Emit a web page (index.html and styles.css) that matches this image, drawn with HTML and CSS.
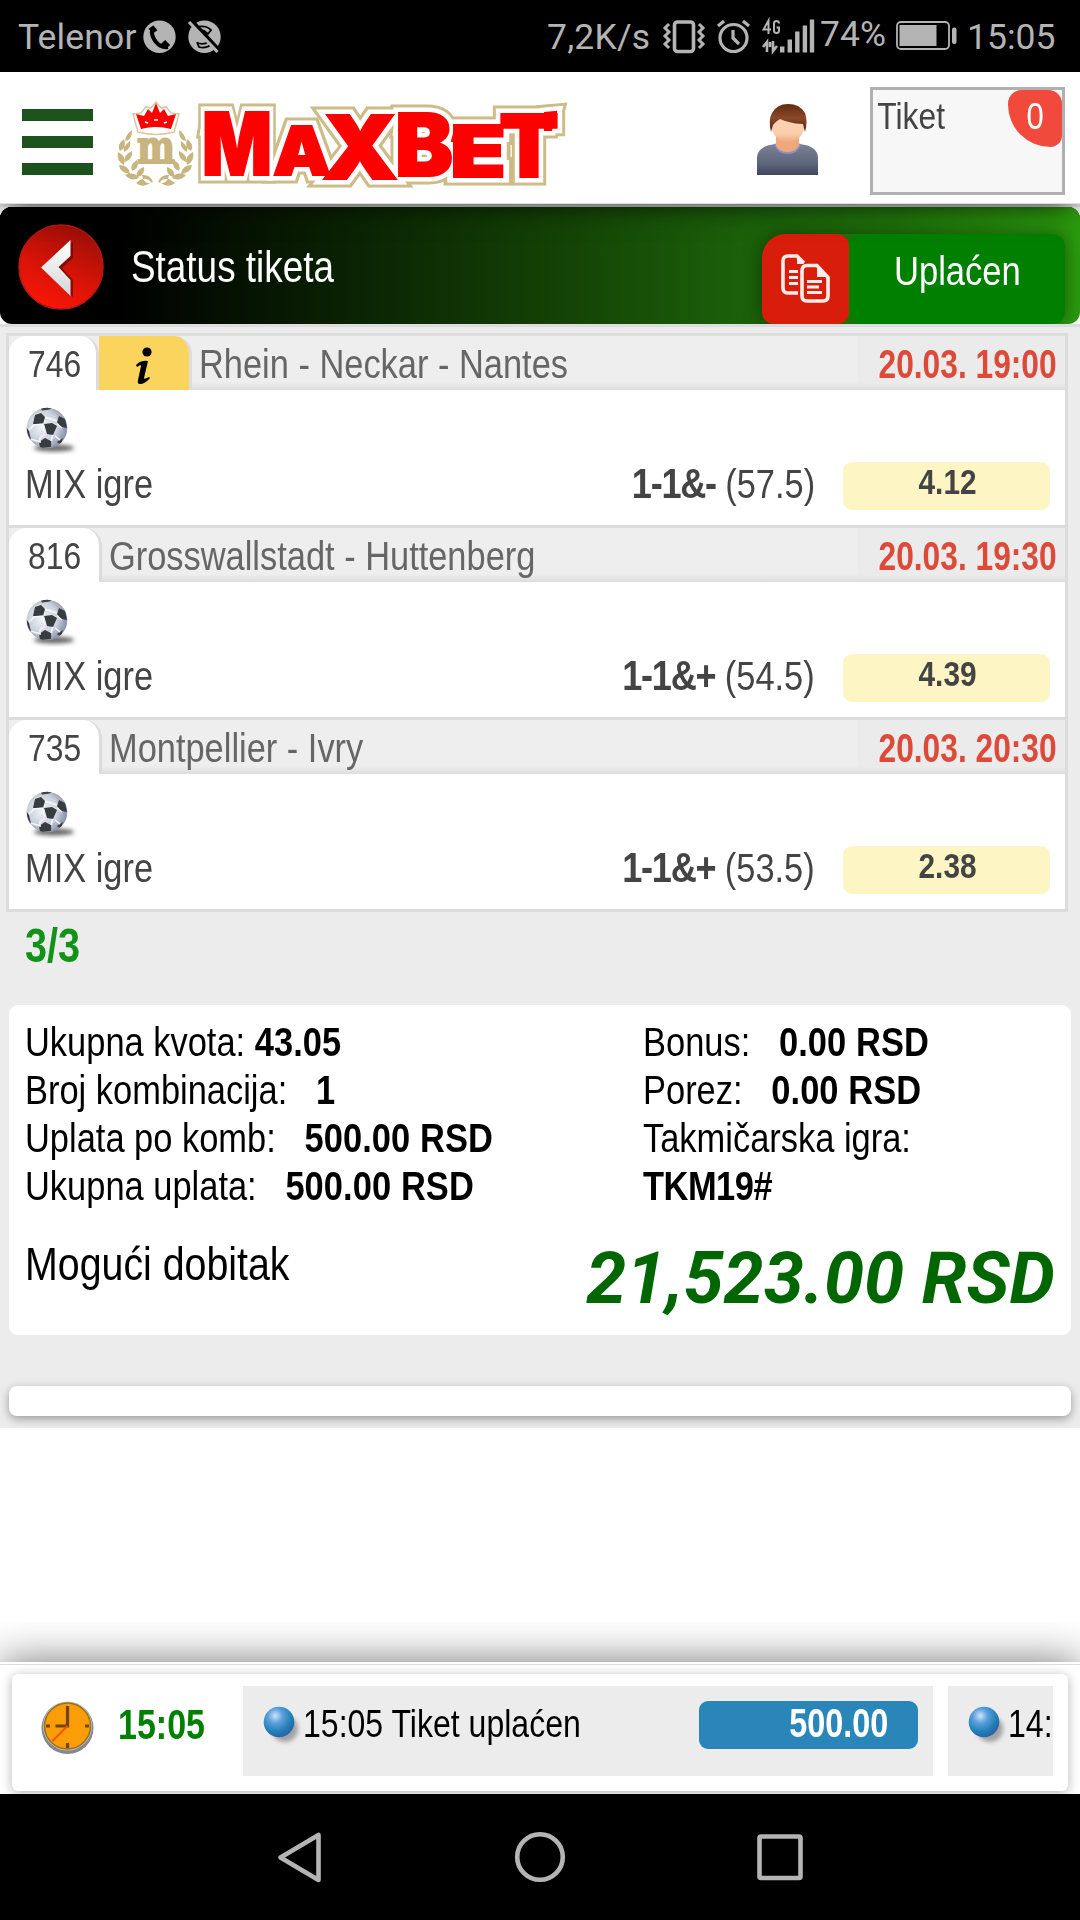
FILE: index.html
```html
<!DOCTYPE html>
<html lang="sr">
<head>
<meta charset="utf-8">
<title>MaxBet - Status tiketa</title>
<link rel="stylesheet" href="styles.css">
</head>
<body>
<svg class="defs" width="0" height="0" aria-hidden="true">
  <defs>
    <radialGradient id="ballShade" cx=".4" cy=".45" r=".65"><stop offset="0" stop-color="#f4f6f8"/><stop offset=".55" stop-color="#ccd3dd"/><stop offset="1" stop-color="#76839a"/></radialGradient>
    <radialGradient id="blueShade" cx=".38" cy=".3" r=".7"><stop offset="0" stop-color="#cfe3f8"/><stop offset=".35" stop-color="#5a9fdc"/><stop offset=".75" stop-color="#217fb4"/><stop offset="1" stop-color="#2b62ad"/></radialGradient>
    <filter id="soft" x="-50%" y="-100%" width="200%" height="300%"><feGaussianBlur stdDeviation="2"/></filter>
    <clipPath id="ballClip"><circle cx="21" cy="21" r="20.3"/></clipPath>
    <symbol id="football" viewBox="0 0 52 48">
      <ellipse cx="28" cy="41" rx="20" ry="3.6" fill="#333" opacity=".75" filter="url(#soft)"/>
      <circle cx="21" cy="21" r="20.3" fill="url(#ballShade)"/>
      <g clip-path="url(#ballClip)">
        <path d="M18 17l8-1 5 3-4 9-6-1zM9 8l6-2 4 4-2 7H7zM13 35l6-4 6 3v6l-11 1zM33 9l6 3 2 9-6-1-4-5zM14 0h14l-5 2.500-7 1zM0 20l3 4 2 9-5-3zM31 35l6-4-2 7z" fill="#383b40"/>
        <path d="M17 17l2 9M17 17l-9 1-5 5M19 27l-5 4 0 4-9-3M29 29l5 4M19 10l12 4M27 28l-2 6M31 17l5 4" fill="none" stroke="#f4f6fa" stroke-width="1.600"/>
      </g>
    </symbol>
    <symbol id="marble" viewBox="0 0 40 42">
      <circle cx="22" cy="23" r="13" fill="#666" opacity=".55" filter="url(#soft)"/>
      <circle cx="16" cy="16" r="15.300" fill="url(#blueShade)"/>
    </symbol>
  </defs>
</svg>

<div class="status">
  <span class="carrier">Telenor</span>
  <svg class="st-calls" width="84" height="40" viewBox="140 17 84 40">
    <circle cx="159.500" cy="36.700" r="16.200" fill="#b4b4b4"/>
    <path d="M152 29q-1 7 4 13t12 5" fill="none" stroke="#000" stroke-width="4"/>
    <path d="M151 27l4 5M163 42l5 5" fill="none" stroke="#000" stroke-width="6"/>
    <circle cx="204.500" cy="36.700" r="16.200" fill="#b4b4b4"/>
    <path d="M197 27q9-2 14 3l-3 4q-4-4-8-4M197 42l2 5q7 2 13-3M198 43q6 2 10-1" fill="none" stroke="#000" stroke-width="1.800"/>
    <path d="M191 20l28 30" stroke="#000" stroke-width="4"/>
    <path d="M189 22l28.500 30" stroke="#b4b4b4" stroke-width="3.200"/>
  </svg>
  <span class="speed">7,2K/s</span>
  <svg class="st-icons" width="156" height="40" viewBox="662 17 156 40" fill="none" stroke="#b4b4b4">
    <rect x="674.500" y="22" width="19" height="29.500" rx="3" stroke-width="3.600"/>
    <path d="M669 24l-4 4 4 4-4 4 4 4-4 4 4 4M699 24l4 4-4 4 4 4-4 4 4 4-4 4" stroke-width="3"/>
    <circle cx="733.500" cy="38" r="13.500" stroke-width="3.200"/>
    <path d="M718 26l6-5M749 26l-6-5M733 30v8l6 6" stroke-width="3.200"/>
    <path d="M768.500 34V20.500l-5 9h7.500M779 23.500q0-2.500-2.500-2.500t-2.500 2.500v7q0 2.500 2.500 2.500t2.500-2.500v-3h-2.500" stroke-width="2"/>
    <path d="M763 47l4-5v10M770 47v-5M773 41v10l4-5" stroke-width="2.600"/>
    <path d="M782.200 52.500v-6M789.800 52.500v-13M797.300 52.500V31.500M804.900 52.500V25.500M812 52.500V19.500" stroke-width="4.400"/>
  </svg>
  <span class="percent">74%</span>
  <svg class="st-batt" width="64" height="32" viewBox="895 20 64 32">
    <rect x="897" y="22" width="52" height="27" rx="4" fill="none" stroke="#b4b4b4" stroke-width="1.800"/>
    <rect x="899.500" y="25" width="37" height="21" fill="#b4b4b4"/>
    <rect x="952" y="27.500" width="4.500" height="16.500" rx="2" fill="#b4b4b4"/>
  </svg>
  <span class="time">15:05</span>
</div>

<header class="top">
  <svg class="menu" width="72" height="68" viewBox="0 0 72 68"><path d="M0 7h71M0 34h71M0 61h71" stroke="#1c531c" stroke-width="12"/></svg>
  <svg class="logo" width="454" height="100" viewBox="114 96 454 100">
    <g fill="#c8b47e">
      <path d="M138 132l-5-18 8-1 5-6 5 1 5-6 5 6 5-1 5 6 8 1-5 18q-18 5-36 0z" fill="#fff" stroke="#d8cba4" stroke-width="1.600"/>
      <path d="M141 129l-5-15 8 2 4-7 4 4 4-10 4 10 4-4 4 7 8-2-5 15q-15-4-30 0z" fill="#f00"/>
      <path d="M145 122l3 1M154 120h4M164 123l3-1" stroke="#fff" stroke-width="1.600"/>
      <text x="137" y="162.500" class="logo-m" textLength="38" lengthAdjust="spacingAndGlyphs">m</text>
      <g id="laurel">
        <path d="M132 130q-6 4-7 11q7 0 7-11zM124 139q-8 6-4 12q7-3 4-12zM130 141q-8 6-6 11q8-4 6-11zM118 152q-2 9 6 13q3-9-6-13zM132 151q-9 4-7 11q8-3 7-11zM119 165q1 8 11 9q-1-9-11-9zM137 160q-8 5-5 11q8-3 5-11zM125 175q6 7 14 3q-5-7-14-3zM144 167q-9 3-7 10q8-1 7-10zM136 183q7 6 15-1q-6-7-15 1zM142 175q8-1 11 7q-9 4-11-7z"/>
      </g>
      <use href="#laurel" transform="matrix(-1 0 0 1 311 0)"/>
    </g>
    <g class="wordmark-gold"><use href="#wordmark"/></g>
    <g class="wordmark-white"><use href="#wordmark"/></g>
    <g class="wordmark-red">
      <g id="wordmark">
        <text><tspan x="202" y="175" font-size="87" textLength="70" lengthAdjust="spacingAndGlyphs">M</tspan><tspan x="273" y="175" font-size="68" textLength="58" lengthAdjust="spacingAndGlyphs">A</tspan><tspan x="322" y="179" font-size="88" textLength="76" lengthAdjust="spacingAndGlyphs">X</tspan><tspan x="395" y="176" font-size="86" textLength="58" lengthAdjust="spacingAndGlyphs">B</tspan><tspan x="450" y="177" font-size="72" textLength="56" lengthAdjust="spacingAndGlyphs">E</tspan><tspan x="499" y="177" font-size="87" textLength="60" lengthAdjust="spacingAndGlyphs">T</tspan></text>
        <path d="M209 113l-3 17h4zM402 113l-3 17h4zM456 126l-4 15h5zM556 112l-5 18h-6v-17z"/>
      </g>
    </g>
  </svg>
  <svg class="user" width="61" height="71" viewBox="0 0 61 71">
    <defs>
      <linearGradient id="shirt" x1="0" y1="0" x2="0" y2="1"><stop offset="0" stop-color="#7b8296"/><stop offset=".6" stop-color="#5f677c"/><stop offset="1" stop-color="#3f475c"/></linearGradient>
      <linearGradient id="skin" x1="0" y1="0" x2="0" y2="1"><stop offset="0" stop-color="#fbd5b8"/><stop offset=".7" stop-color="#fbceac"/><stop offset="1" stop-color="#eda87c"/></linearGradient>
      <linearGradient id="hair" x1="0" y1="0" x2="0" y2="1"><stop offset="0" stop-color="#63290f"/><stop offset=".5" stop-color="#8a4a2a"/><stop offset="1" stop-color="#541c08"/></linearGradient>
    </defs>
    <path d="M0 71V53q1-11 18-13h25q17 2 18 13v18z" fill="url(#shirt)"/>
    <path d="M17 40q3 10 13.500 10T44 40l-4-1H21z" fill="#8d90c4"/>
    <path d="M19 32h23v10q-4 6-11.500 6T19 42z" fill="#eda87c"/>
    <path d="M14 17q0 12 6 17t10.500 4.500T42 34q6-5 6-17L31 8z" fill="url(#skin)"/>
    <path d="M14 28q-3-12 1-19Q20 0 31 0q12 0 17 9 3 8 0 19l-2-8q-8 0-14-2-5-1-9-3-5 3-7 6z" fill="url(#hair)"/>
  </svg>
  <div class="ticket-box"><span class="ticket-label">Tiket</span><span class="ticket-badge"><span>0</span></span></div>
</header>

<main>
  <div class="title-bar">
    <svg class="back" width="88" height="88" viewBox="17 223 88 88">
      <defs><linearGradient id="red" x1=".7" y1="0" x2=".3" y2="1"><stop offset="0" stop-color="#980f09"/><stop offset=".55" stop-color="#d81307"/><stop offset="1" stop-color="#fb1609"/></linearGradient>
      <linearGradient id="silver" x1="0" y1="0" x2="0" y2="1"><stop offset="0" stop-color="#fff"/><stop offset="1" stop-color="#d3d7d7"/></linearGradient></defs>
      <circle cx="61" cy="267" r="42" fill="url(#red)" stroke="#b51a12" stroke-width="1.500"/>
      <path d="M73 242v16l-11 10 11 12v17L43 269z" fill="#610806" opacity=".7"/>
      <path d="M70.500 240v16l-12 11 12 13v16L41 267.500z" fill="url(#silver)"/>
    </svg>
    <h1>Status tiketa</h1>
    <div class="actions">
      <div class="copy">
        <svg width="50" height="50" viewBox="0 0 50 50" fill="none" stroke="#fdecea" stroke-width="3.600">
          <path d="M17 39H7q-5 0-5-5V7q0-5 5-5h9l7 7"/><path d="M16 2v8h7z" fill="#fdecea" stroke="none"/>
          <path d="M8 17.500h9M8 23.500h9M8 29.500h9" stroke-width="3.200"/>
          <path d="M26 11.500h10l11 12V42q0 5-5 5H26q-5 0-5-5V17q0-5.500 5-5.500z"/><path d="M36 11.500V23h11z" fill="#fdecea" stroke="none"/>
          <path d="M26 27.500h15M26 33h12M26 38.500h15" stroke-width="3.200"/>
        </svg>
      </div>
      <div class="paid"><span>Uplaćen</span></div>
    </div>
  </div>

  <div class="page">
    <section class="matches">
      <article class="match">
        <div class="m-head">
          <div class="tab narrow-tab"><span>746</span></div>
          <div class="info"><svg width="18" height="38" viewBox="0 0 18 38"><circle cx="12" cy="5" r="4.600"/><path d="M1 18q5-5 12-4l-4 17q0 2 5-1l1 1q-5 6-10 6-3 0-2-4l3-14q0-2-4 1z"/></svg></div>
          <div class="teams"><span>Rhein - Neckar - Nantes</span></div>
          <div class="date"><span>20.03. 19:00</span></div>
        </div>
        <div class="m-body">
          <svg class="ball" width="52" height="48"><use href="#football"/></svg>
          <div class="m-row"><span class="game">MIX igre</span><span class="pick"><b>1-1&amp;-</b> (57.5)</span><span class="odds"><b>4.12</b></span></div>
        </div>
      </article>
      <article class="match">
        <div class="m-head">
          <div class="tab"><span>816</span></div>
          <div class="teams"><span>Grosswallstadt - Huttenberg</span></div>
          <div class="date"><span>20.03. 19:30</span></div>
        </div>
        <div class="m-body">
          <svg class="ball" width="52" height="48"><use href="#football"/></svg>
          <div class="m-row"><span class="game">MIX igre</span><span class="pick"><b>1-1&amp;+</b> (54.5)</span><span class="odds"><b>4.39</b></span></div>
        </div>
      </article>
      <article class="match">
        <div class="m-head">
          <div class="tab"><span>735</span></div>
          <div class="teams"><span>Montpellier - Ivry</span></div>
          <div class="date"><span>20.03. 20:30</span></div>
        </div>
        <div class="m-body">
          <svg class="ball" width="52" height="48"><use href="#football"/></svg>
          <div class="m-row"><span class="game">MIX igre</span><span class="pick"><b>1-1&amp;+</b> (53.5)</span><span class="odds"><b>2.38</b></span></div>
        </div>
      </article>
    </section>
    <div class="count"><span>3/3</span></div>

    <section class="summary">
      <div class="cols">
        <div class="col">
          <p>Ukupna kvota: <b>43.05</b></p>
          <p>Broj kombinacija: &nbsp; <b>1</b></p>
          <p>Uplata po komb: &nbsp; <b>500.00 RSD</b></p>
          <p>Ukupna uplata: &nbsp; <b>500.00 RSD</b></p>
        </div>
        <div class="col">
          <p>Bonus: &nbsp; <b>0.00 RSD</b></p>
          <p>Porez: &nbsp; <b>0.00 RSD</b></p>
          <p>Takmičarska igra:</p>
          <p class="code"><b>TKM19#</b></p>
        </div>
      </div>
      <div class="win"><span class="win-label">Mogući dobitak</span><span class="win-sum">21,523.00 RSD</span></div>
    </section>
    <div class="strip"></div>
  </div>
</main>

<footer class="ticker">
  <div class="ticker-card">
    <svg class="clock" width="56" height="56" viewBox="40 1700 56 56">
      <circle cx="67.500" cy="1728" r="26" fill="#85878c"/><circle cx="67.500" cy="1726" r="24.500" fill="#c5c5c3"/>
      <circle cx="67.500" cy="1726" r="23" fill="#fb9d07" stroke="#96701e" stroke-width="1.500"/>
      <path d="M67.500 1706v20h-12M67.500 1743v5M46 1726h4M85 1726h4" fill="none" stroke="#6f4608" stroke-width="3.200"/>
      <path d="M67.500 1726l-15 15" stroke="#f4520a" stroke-width="2"/>
    </svg>
    <span class="now">15:05</span>
    <div class="event">
      <svg width="40" height="42"><use href="#marble"/></svg>
      <span class="event-text">15:05 Tiket uplaćen</span>
      <span class="amount"><b>500.00</b></span>
    </div>
    <div class="event next">
      <svg width="40" height="42"><use href="#marble"/></svg>
      <span class="event-text">14:</span>
    </div>
  </div>
</footer>

<nav class="nav">
  <svg width="1080" height="126" viewBox="0 1794 1080 126" fill="none" stroke="#b4b4b4" stroke-width="4.600" stroke-linejoin="round">
    <path d="M318.500 1835v45L280.500 1857.500z"/><circle cx="540" cy="1857" r="22.800"/><rect x="759.500" y="1836.500" width="41" height="41.500" rx="1.500"/>
  </svg>
</nav>
</body>
</html>
```
FILE: styles.css
```css
* { box-sizing: border-box; margin: 0; padding: 0; }
body { width: 1080px; height: 1920px; overflow: hidden; display: flex; flex-direction: column; background: #fff; font-family: "Liberation Sans", sans-serif; color: #444; white-space: nowrap; }
svg { display: block; flex: none; }
.defs { position: absolute; }
h1, b { font-weight: bold; }

/* phone status bar */
.status { height: 72px; flex: none; background: #000; color: #b4b4b4; font: 35.500px/72px Roboto, sans-serif; display: flex; padding-left: 18px; }
.status > * { flex: none; }
.status span { height: 72px; padding-top: 1px; }
.carrier { width: 122px; letter-spacing: .15px; }
.st-calls { margin-top: 17px; }
.speed { margin-left: 323px; width: 115px; letter-spacing: .2px; }
.st-icons { margin-top: 17px; }
.status .percent { margin-left: 2px; width: 75px; padding-top: 0; margin-top: -2px; }
.st-batt { margin-top: 20px; }
.time { margin-left: 8px; }

/* site header */
.top { position: relative; z-index: 2; height: 132px; flex: none; background: #fff; border-bottom: 1px solid #ddd; display: flex; align-items: flex-start; padding: 15px 15px 0 22px; box-shadow: 0 10px 24px -8px rgba(0,0,0,.75); }
.menu { margin-top: 21px; }
.logo { margin: 9px 0 0 20px; overflow: visible; }
.logo-m { font: bold 47px "DejaVu Serif", serif; stroke: #c8b47e; stroke-width: 2px; }
.wordmark-red, .wordmark-gold, .wordmark-white { font-family: Inter, sans-serif; font-weight: 900; }
.wordmark-red { fill: #f00; stroke: #f00; stroke-width: 2px; }
.wordmark-white { fill: #fff; stroke: #fff; stroke-width: 11px; }
.wordmark-gold { fill: #cdbb88; stroke: #cdbb88; stroke-width: 17px; }
.user { margin: 17px 0 0 189px; }
.ticket-box { margin-left: auto; width: 195px; height: 108px; border: 3px solid #b0b0b0; background: #f7f7f7; display: flex; justify-content: space-between; font-size: 36.500px; line-height: 54px; }
.ticket-label { padding-left: 5px; transform: scaleX(.87); transform-origin: 0 0; }
.ticket-badge { width: 54px; height: 57px; background: #f1493b; color: #fff; border-radius: 14px 14px 12px 44px / 14px 14px 12px 44px; text-align: center; }
.ticket-badge span { display: inline-block; transform: scaleX(.85); }

/* title bar */
main { flex: none; height: 1458px; background: #fff; }
.title-bar { height: 120px; border-top: 3px solid #ddd; border-radius: 0 0 12px 12px; background: radial-gradient(circle at 0 100%, transparent 12px, #ececec 12.500px) 1068px 0 / 12px 12px no-repeat, radial-gradient(circle at 100% 100%, transparent 12px, #ececec 12.500px) 0 0 / 12px 12px no-repeat, linear-gradient(90deg, #000 0, #000 120px, #0d2d04 420px, #133f05 540px, #1b600a 740px, #21760b 900px, #2b9c0e 1080px); display: flex; padding-left: 17px; overflow: hidden; }
.back { margin-top: 16px; }
h1 { font-size: 43.500px; font-weight: normal; color: #fff; line-height: 120px; margin-left: 26px; transform: scaleX(.848); transform-origin: 0 0; }
.actions { margin: 27px 15px 0 auto; width: 303px; height: 90px; display: flex; box-shadow: 0 0 18px 2px rgba(0,0,0,.35); border-radius: 24px 12px 12px 12px; }
.copy { width: 87px; background: #d81e0a; border-radius: 24px 12px 12px 12px; padding: 20px 0 0 19px; }
.paid { width: 216px; background: #007f00; border-radius: 12px; color: #fff; font-size: 40px; line-height: 74px; text-align: center; }
.paid span { display: inline-block; transform: scaleX(.865); }

/* ticket rows */
.page { height: 1104px; background: #ececec; border-top: 3px solid #ddd; padding: 6px 9px 0 6px; }
.matches { width: 1062px; border: 3px solid #dcdcdc; border-bottom: 0; background: #fff; }
.match { height: 192px; border-bottom: 3px solid #dcdcdc; }
.m-head { height: 54px; display: flex; background: linear-gradient(#eee 0, #eee 46px, #ddd 54px); font-size: 40px; line-height: 56px; color: #666; }
.tab { width: 93px; flex: none; background: #fff; border-right: 3px solid #dcdcdc; border-radius: 18px 18px 0 0; font-size: 37px; line-height: 58px; color: #444; padding-left: 19px; }
.narrow-tab { width: 90px; }
.tab span { display: inline-block; transform: scaleX(.86); transform-origin: 0 0; }
.info { width: 93px; flex: none; background: #fbd45e; border-right: 3px solid #ddd; border-radius: 0 18px 0 0; padding: 11px 0 0 36px; }
.teams { flex: 1; min-width: 0; padding-left: 7px; }
.teams span { display: inline-block; transform: scaleX(.86); transform-origin: 0 0; }
.date { width: 207px; flex: none; background: linear-gradient(#ebebeb 0, #ebebeb 47px, #ddd 54px); color: #dc4a3a; font-weight: bold; display: flex; justify-content: flex-end; padding-right: 8px; }
.date span { flex: none; transform: scaleX(.793); transform-origin: 100% 0; }
.m-body { height: 135px; padding: 17px 15px 0 17px; }
.m-row { display: flex; margin-top: 7px; height: 48px; line-height: 44px; font-size: 40px; }
.game { margin-left: -1px; transform: scaleX(.86); transform-origin: 0 0; }
.pick { margin-left: auto; transform: scaleX(.86); transform-origin: 100% 0; }
.pick b { letter-spacing: -1.500px; font-size: 42px; }
.odds { margin-left: 28px; width: 207px; background: #fdf5c4; border-radius: 9px; text-align: center; font-size: 35.500px; line-height: 41px; }
.odds b { display: inline-block; transform: scaleX(.84); position: relative; left: 1px; }
.count { height: 93px; color: #109318; font: bold 49px/67px "Liberation Sans", sans-serif; padding-left: 19px; }
.count span { display: inline-block; transform: scaleX(.81); transform-origin: 0 0; }

/* payment summary */
.summary { margin-left: 3px; width: 1062px; height: 330px; background: #fff; border-radius: 9px; color: #000; padding: 13px 16px 0 16px; }
.cols { display: grid; grid-template-columns: 618px 1fr; }
.col p { font-size: 41px; line-height: 48px; transform: scaleX(.84); transform-origin: 0 0; }
.col b { letter-spacing: .1px; }
.col .code b { letter-spacing: -.600px; }
.win { display: flex; justify-content: space-between; }
.win-label { font-size: 46px; line-height: 109px; transform: scaleX(.855); transform-origin: 0 0; }
.win-sum { color: #060; font: italic bold 72px/137px Roboto, sans-serif; }
.strip { margin: 51px 0 0 3px; width: 1062px; height: 30px; border-radius: 8px; background: #fff; box-shadow: 0 3px 10px rgba(0,0,0,.35); }

/* event ticker */
.ticker { position: relative; flex: none; height: 132px; background: linear-gradient(#fff 2px, #ddd 2px, #ddd 3px, #fff 3px); box-shadow: 0 0 40px 0 rgba(0,0,0,.55); padding: 2px 0 0; clip-path: inset(-40px 0 0 0); }
.ticker-card { margin: 10px 12px 0; height: 117px; border-radius: 6px; background: #fff; box-shadow: 0 2px 12px rgba(0,0,0,.3); display: flex; padding: 12px 15px 0 28px; }
.clock { margin-top: 14px; }
.now { width: 124px; margin-left: 22px; color: green; font: bold 42px/78px "Liberation Sans", sans-serif; transform: scaleX(.81); transform-origin: 0 0; }
.event { margin-left: 1px; width: 690px; height: 90px; flex: none; background: #ececec; display: flex; padding: 15px 15px 0 20px; color: #000; font-size: 38px; line-height: 46px; overflow: hidden; }
.event svg { margin-top: 5px; }
.event-text { transform: scaleX(.843); transform-origin: 0 0; }
.amount { margin-left: auto; width: 219px; height: 48px; background: #2a86b9; color: #fff; border-radius: 9px; text-align: right; padding-right: 30px; font-size: 40px; line-height: 44px; }
.amount b { display: inline-block; transform: scaleX(.81); transform-origin: 100% 0; }
.next { margin-left: 15px; width: 105px; padding-right: 0; }
.nav { height: 126px; flex: none; background: #000; }
```
